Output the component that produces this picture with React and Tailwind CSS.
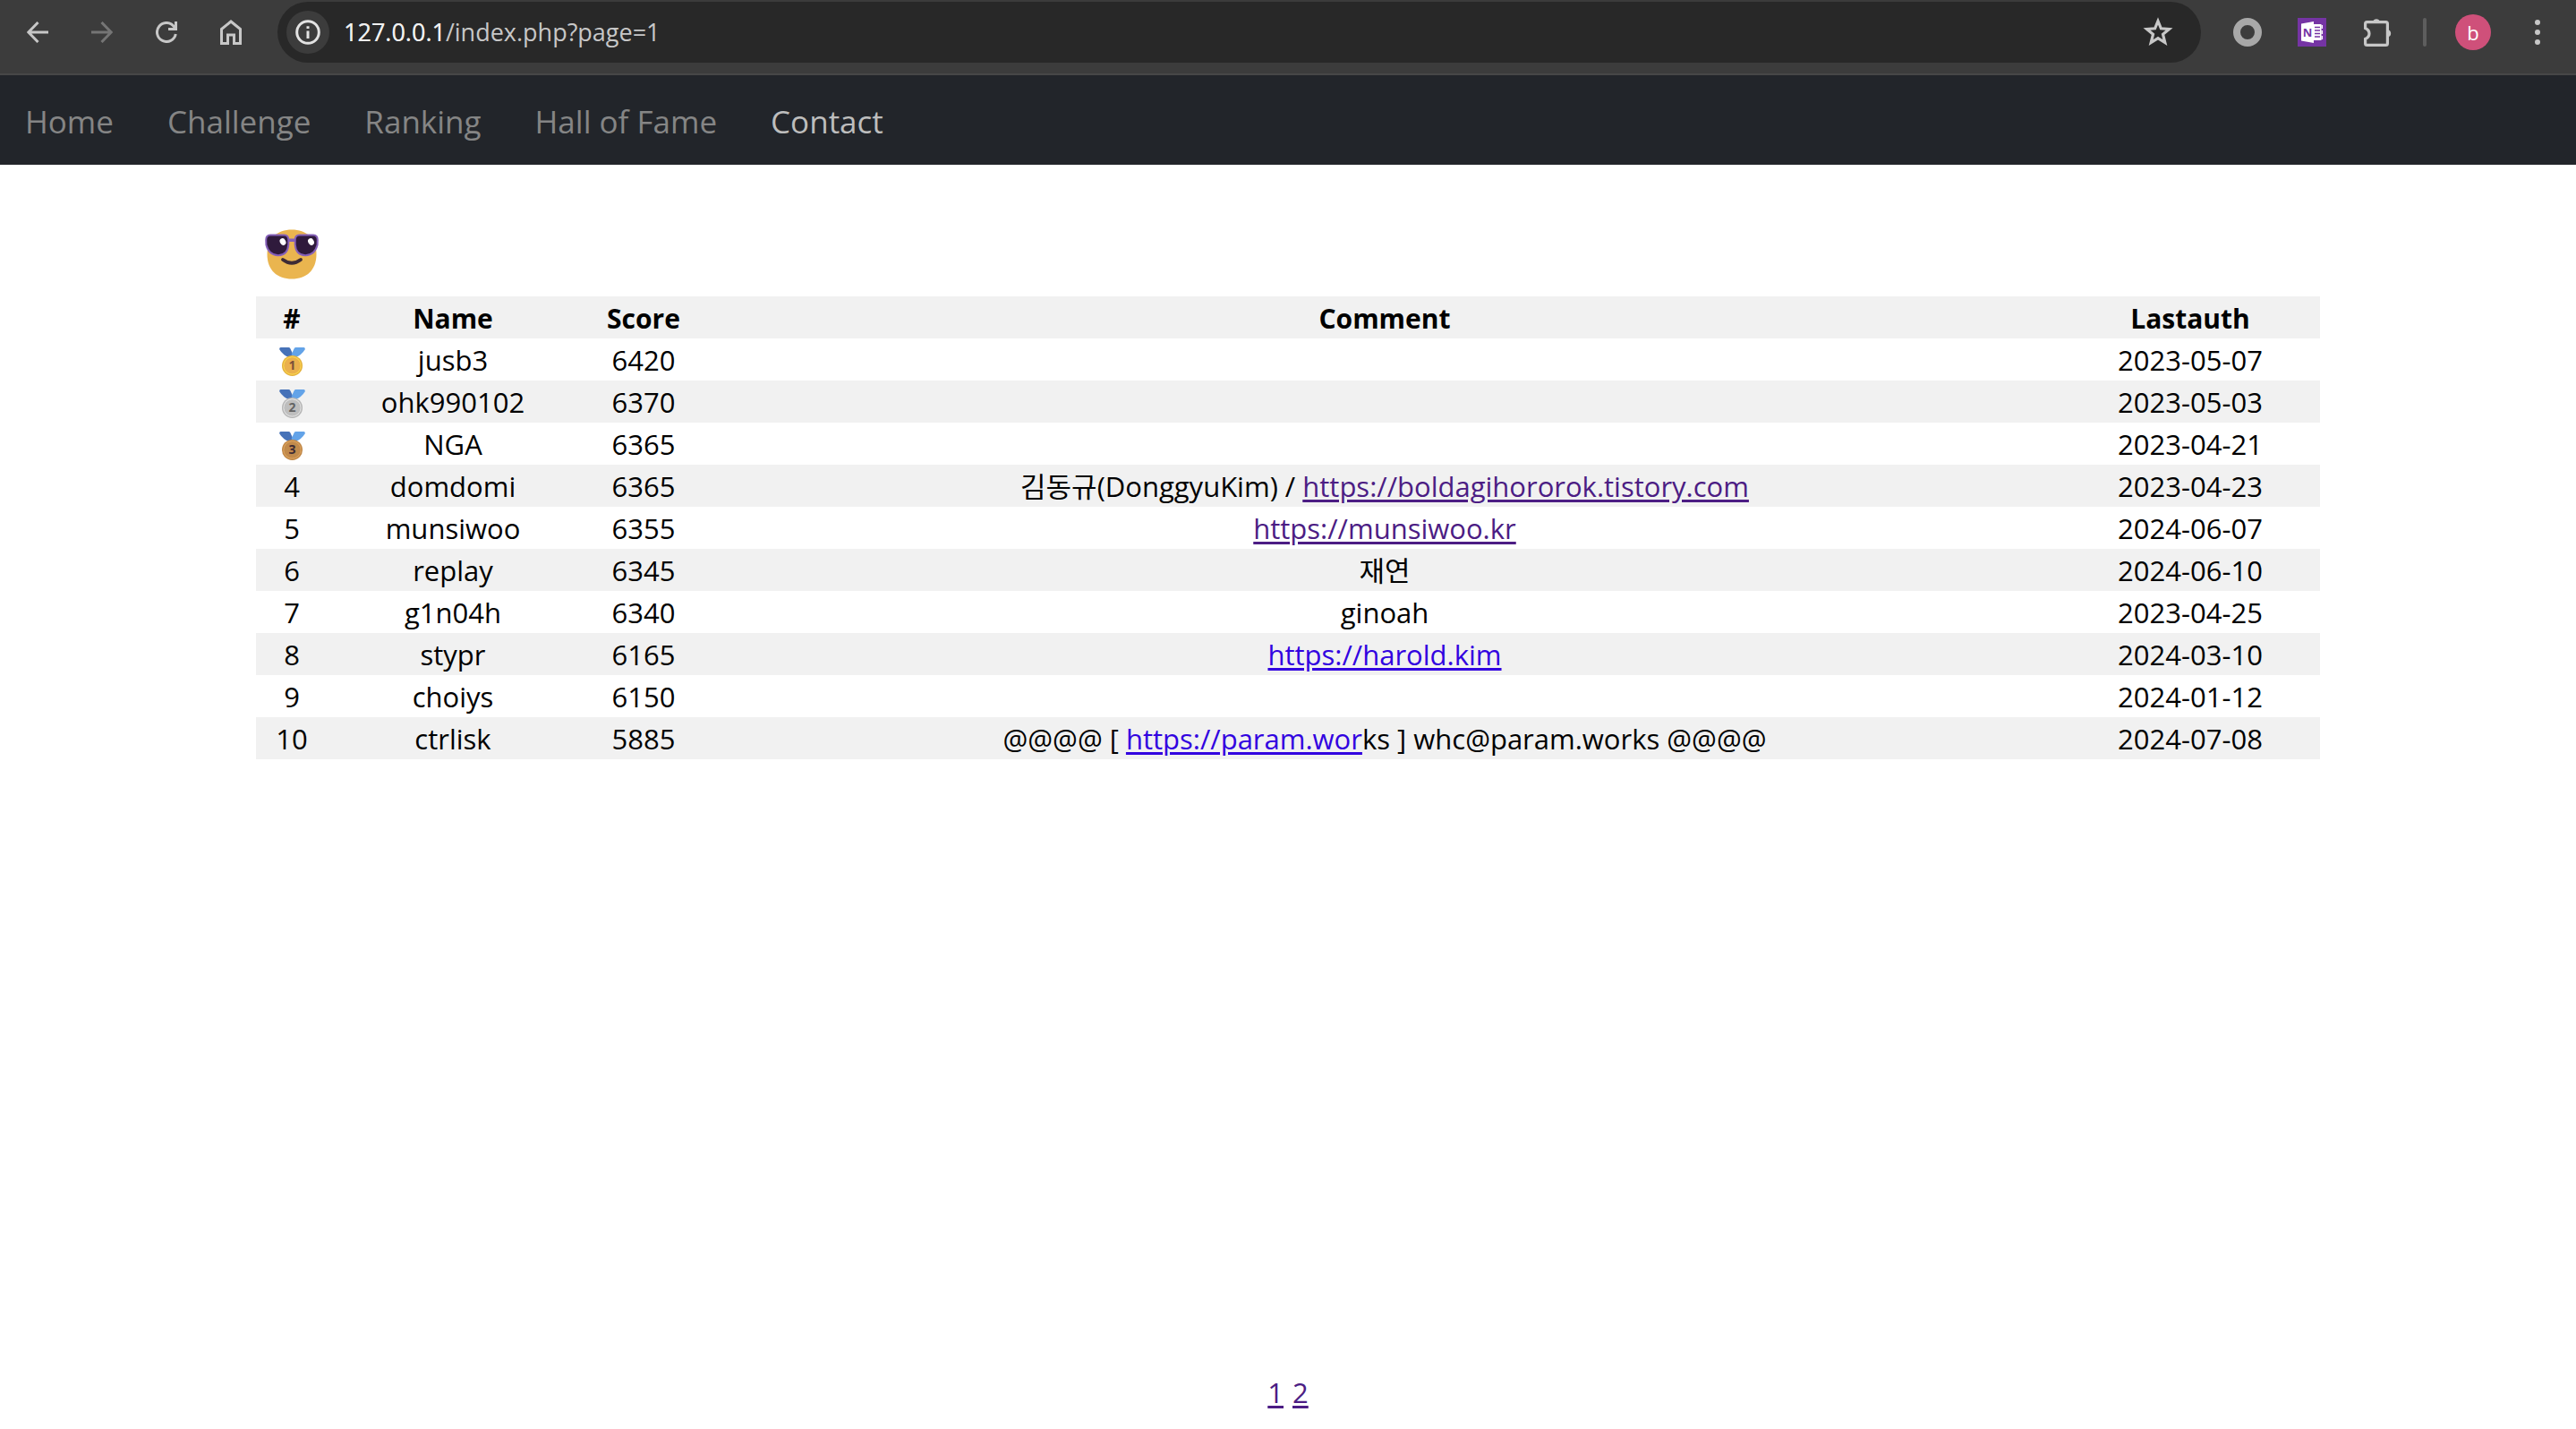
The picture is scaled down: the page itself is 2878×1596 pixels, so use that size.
const iconButton =
  "flex size-12 items-center justify-center rounded-full text-[#c7c7c7] [&>svg]:shrink-0";

const navItems = [
  { label: "Home" },
  { label: "Challenge" },
  { label: "Ranking" },
  { label: "Hall of Fame" },
  { label: "Contact", active: true },
];

const medals = {
  1: { rim: "#e3b03c", ring: "#f8cf4f", face: "#eab04d", digit: "#7a4f3a" },
  2: { rim: "#b4b4b4", ring: "#dcdcdc", face: "#bebebe", digit: "#636363" },
  3: { rim: "#bf8544", ring: "#d79f5c", face: "#c18a4c", digit: "#3e2b33" },
};

function Visited({ href, children }) {
  return (
    <a href={href} className="text-[#4c1d84] underline decoration-[3px] underline-offset-[3px]">
      {children}
    </a>
  );
}

function Unvisited({ href, children }) {
  return (
    <a href={href} className="text-[#3203e0] underline decoration-[3px] underline-offset-[3px]">
      {children}
    </a>
  );
}

const rows = [
  { rank: 1, name: "jusb3", score: 6420, date: "2023-05-07" },
  { rank: 2, name: "ohk990102", score: 6370, date: "2023-05-03" },
  { rank: 3, name: "NGA", score: 6365, date: "2023-04-21" },
  {
    rank: 4,
    name: "domdomi",
    score: 6365,
    date: "2023-04-23",
    comment: (
      <>
        김동규(DonggyuKim) /{" "}
        <Visited href="https://boldagihororok.tistory.com">https://boldagihororok.tistory.com</Visited>
      </>
    ),
  },
  {
    rank: 5,
    name: "munsiwoo",
    score: 6355,
    date: "2024-06-07",
    comment: <Visited href="https://munsiwoo.kr">https://munsiwoo.kr</Visited>,
  },
  { rank: 6, name: "replay", score: 6345, date: "2024-06-10", comment: "재연" },
  { rank: 7, name: "g1n04h", score: 6340, date: "2023-04-25", comment: "ginoah" },
  {
    rank: 8,
    name: "stypr",
    score: 6165,
    date: "2024-03-10",
    comment: <Unvisited href="https://harold.kim">https://harold.kim</Unvisited>,
  },
  { rank: 9, name: "choiys", score: 6150, date: "2024-01-12" },
  {
    rank: 10,
    name: "ctrlisk",
    score: 5885,
    date: "2024-07-08",
    comment: (
      <>
        @@@@ [ <Unvisited href="https://param.wor">https://param.wor</Unvisited>ks ] whc@param.works @@@@
      </>
    ),
  },
];

function Medal({ place }) {
  const c = medals[place];
  return (
    <svg viewBox="0 0 29 32" className="mx-auto mt-0.5 h-8 w-[29px]" role="img" aria-label={`Rank ${place}`}>
      <path d="M1.5 0H10.5Q11.6 0 12.2 1L15.5 8L11 11Q4 8.5 0.4 2.4Q-0.3 0.6 1.5 0Z" fill="#4672b8" />
      <path d="M27.5 0H18.5Q17.4 0 16.8 1L13.5 8L18 11Q25 8.5 28.6 2.4Q29.3 0.6 27.5 0Z" fill="#63a3e8" />
      <circle cx="14.5" cy="20.4" r="11.5" fill={c.rim} />
      <circle cx="14.5" cy="20.4" r="9.6" fill="none" stroke={c.ring} strokeWidth="1.4" />
      <circle cx="14.5" cy="20.4" r="8.8" fill={c.face} />
      <text
        x="14.5"
        y="25.4"
        textAnchor="middle"
        fontSize="14"
        fontWeight="700"
        fontFamily="Open Sans, sans-serif"
        fill={c.digit}
      >
        {place}
      </text>
    </svg>
  );
}

function CoolFace() {
  return (
    <svg viewBox="0 0 60 56" className="h-14 w-[60px]" role="img" aria-label="Smiling face with sunglasses">
      <path d="M30 0.5C46 0.5 57.5 10 57.5 28S46 55.5 30 55.5S2.5 46 2.5 28S14 0.5 30 0.5Z" fill="#eab54f" />
      <path d="M27 10.5h6v3.5h-6z" fill="#8560b8" />
      <path
        d="M6 6.5H21.5Q26.3 6.5 26.3 12V17Q25.5 29 14.8 29.2Q4.5 29 1.4 17.5L1.2 12Q1.2 6.5 6 6.5Z"
        fill="#2f1a3c"
        stroke="#8560b8"
        strokeWidth="2"
      />
      <path
        d="M54 6.5H38.5Q33.7 6.5 33.7 12V17Q34.5 29 45.2 29.2Q55.5 29 58.6 17.5L58.8 12Q58.8 6.5 54 6.5Z"
        fill="#2f1a3c"
        stroke="#8560b8"
        strokeWidth="2"
      />
      <ellipse cx="20" cy="14" rx="3.2" ry="3.9" transform="rotate(-30 20 14)" fill="#fff" />
      <ellipse cx="51.5" cy="14" rx="3.2" ry="3.9" transform="rotate(-30 51.5 14)" fill="#fff" />
      <path d="M20 34Q30 41.5 40 34" fill="none" stroke="#3e2b35" strokeWidth="3.8" strokeLinecap="round" />
    </svg>
  );
}

function BrowserBar() {
  return (
    <div className="flex h-[84px] items-start border-b-2 border-[#474747] bg-[#3c3c3c] pt-[2px] pl-[18px] pr-[19px]">
      <div className="flex h-[68px] items-center gap-6">
        <button type="button" aria-label="Back" className={iconButton}>
          <svg width="24" height="24" viewBox="0 0 24 24" fill="none" stroke="currentColor" strokeWidth="3">
            <path d="M24 12H2.5M12.5 1L1.8 12L12.5 23" />
          </svg>
        </button>
        <button type="button" aria-label="Forward" className={iconButton}>
          <svg width="24" height="24" viewBox="0 0 24 24" fill="none" stroke="#757575" strokeWidth="3">
            <path d="M0 12H21.5M11.5 1L22.2 12L11.5 23" />
          </svg>
        </button>
        <button type="button" aria-label="Reload" className={iconButton}>
          <svg width="24" height="24" viewBox="0 0 24 24" fill="none" stroke="currentColor" strokeWidth="3">
            <path d="M22.3 14A10.5 10.5 0 1 1 20.5 5.8L22 8" />
            <path d="M22.5 0V8.5H14" />
          </svg>
        </button>
        <button type="button" aria-label="Home page" className={iconButton}>
          <svg width="24" height="28" viewBox="0 0 24 28" fill="none" stroke="currentColor" strokeWidth="3">
            <path d="M1.5 26.5V10.5L12 2L22.5 10.5V26.5H15.5V17H8.5V26.5Z" />
          </svg>
        </button>
      </div>
      <div className="ml-7 flex h-[68px] flex-1 items-center rounded-full bg-[#282828] pl-[10px] pr-6">
        <button
          type="button"
          aria-label="View site information"
          className="flex size-12 items-center justify-center rounded-full bg-[#3c3c3c] text-[#e3e3e3]"
        >
          <svg width="28" height="28" viewBox="0 0 28 28" fill="none" stroke="currentColor" strokeWidth="3">
            <circle cx="14" cy="14" r="12.3" />
            <path d="M14 12.5V21M14 7.2V10" />
          </svg>
        </button>
        <div className="relative ml-4 flex-1 text-[27px] leading-10">
          <input
            aria-label="Address"
            defaultValue="127.0.0.1/index.php?page=1"
            className="block w-full bg-transparent text-[#c7c7c7] outline-none"
          />
          <span aria-hidden="true" className="pointer-events-none absolute inset-y-0 left-0 text-[#f0f0f0]">
            127.0.0.1
          </span>
        </div>
        <button type="button" aria-label="Bookmark this tab" className={iconButton}>
          <svg width="34" height="34" viewBox="0 0 34 34" fill="none" stroke="currentColor" strokeWidth="3.2">
            <path d="M17 4.5L20.4 12.8L29.5 13.5L22.5 19.4L24.8 28.5L17 23.6L9.2 28.5L11.5 19.4L4.5 13.5L13.6 12.8Z" />
          </svg>
        </button>
      </div>
      <div className="ml-7 flex h-[68px] items-center">
        <button type="button" aria-label="Extension" className={iconButton}>
          <svg width="32" height="32" viewBox="0 0 32 32">
            <circle cx="16" cy="16" r="12" fill="none" stroke="#a8a8a8" strokeWidth="8" />
          </svg>
        </button>
        <button type="button" aria-label="OneNote clipper" className={`${iconButton} ml-6`}>
          <svg width="32" height="32" viewBox="0 0 32 32">
            <path d="M0 0H32V32H0Z" fill="#7534a4" />
            <path d="M18 7H26.5V25H18Z" fill="#fff" />
            <path d="M19 10.5h6M19 14h6M19 17.5h6M19 21h6" stroke="#7534a4" strokeWidth="1.3" />
            <path d="M27.3 8v4M27.3 14v4M27.3 20v4" stroke="#fff" strokeWidth="1.5" />
            <path d="M4 6.5L18 4V28L4 25.5Z" fill="#fff" />
            <text
              x="11"
              y="21"
              textAnchor="middle"
              fontSize="13"
              fontWeight="700"
              fontFamily="Open Sans, sans-serif"
              fill="#7534a4"
            >
              N
            </text>
          </svg>
        </button>
        <button type="button" aria-label="Extensions" className={`${iconButton} ml-[26px]`}>
          <svg width="32" height="34" viewBox="0 0 32 34" fill="none" stroke="currentColor" strokeWidth="3.2">
            <path d="M3.5 5.6H24.5Q26.4 5.6 26.4 7.5V29.5Q26.4 31.4 24.5 31.4H3.5Q1.6 31.4 1.6 29.5V24.5Q6 22.5 6 18.5T1.6 12.5V7.5Q1.6 5.6 3.5 5.6Z" />
            <path
              d="M10 5.5A4.2 4.5 0 0 1 18 5.5ZM27 14.2A4.3 4.3 0 0 1 27 22.5Z"
              fill="currentColor"
              stroke="none"
            />
          </svg>
        </button>
        <span className="ml-[26px] h-8 w-1 rounded-full bg-[#5e5e5e]" />
        <button
          type="button"
          aria-label="Profile"
          className="ml-8 flex size-10 items-center justify-center rounded-full bg-[#cf507a] text-[22px] leading-none text-white"
        >
          b
        </button>
        <button type="button" aria-label="Browser menu" className={`${iconButton} ml-7`}>
          <svg width="6" height="28" viewBox="0 0 6 28" fill="currentColor">
            <circle cx="3" cy="3" r="3" />
            <circle cx="3" cy="14" r="3" />
            <circle cx="3" cy="25" r="3" />
          </svg>
        </button>
      </div>
    </div>
  );
}

export default function App() {
  return (
    <div className="flex min-h-screen flex-col bg-white font-['Open_Sans','Noto_Sans_CJK_KR',sans-serif] text-black">
      <BrowserBar />
      <nav className="flex h-[100px] items-center gap-[60px] bg-[#22252a] px-7 pt-1 text-[35px] leading-[50px]">
        {navItems.map((item) => (
          <a key={item.label} href="#" className={item.active ? "text-[#bdbdbd]" : "text-[#858585]"}>
            {item.label}
          </a>
        ))}
      </nav>
      <main className="mx-[286px] flex flex-1 flex-col text-[31px] leading-[45px]">
        <div className="flex w-20 justify-center pt-[72px] pb-[19px]">
          <CoolFace />
        </div>
        <table className="w-full table-fixed border-collapse text-center">
          <colgroup>
            <col className="w-20" />
            <col className="w-[280px]" />
            <col className="w-[146px]" />
            <col />
            <col className="w-[290px]" />
          </colgroup>
          <thead>
            <tr className="bg-[#f1f1f1] text-[30px] font-bold [&>th]:p-0 [&>th]:pt-0.5">
              <th>#</th>
              <th>Name</th>
              <th>Score</th>
              <th>Comment</th>
              <th>Lastauth</th>
            </tr>
          </thead>
          <tbody>
            {rows.map((r) => (
              <tr key={r.rank} className="h-[47px] even:bg-[#f1f1f1] [&>td]:p-0 [&>td]:pt-0.5">
                <td>{r.rank <= 3 ? <Medal place={r.rank} /> : r.rank}</td>
                <td>{r.name}</td>
                <td>{r.score}</td>
                <td>{r.comment}</td>
                <td>{r.date}</td>
              </tr>
            ))}
          </tbody>
        </table>
        <div className="mt-auto flex justify-center gap-[10px] pb-[18px]">
          <Visited href="?page=1">1</Visited>
          <Visited href="?page=2">2</Visited>
        </div>
      </main>
    </div>
  );
}
